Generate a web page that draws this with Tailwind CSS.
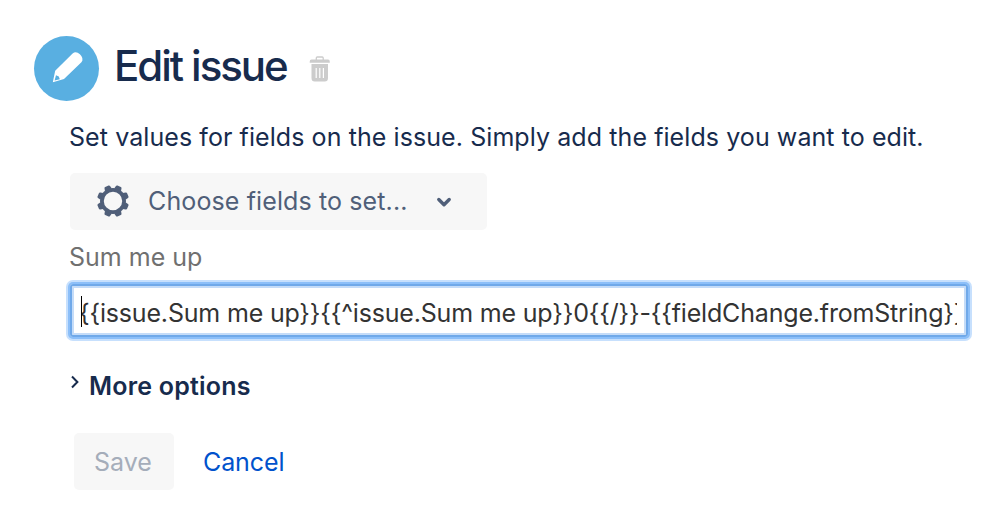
<!DOCTYPE html>
<html lang="en">
<head>
    <meta charset="UTF-8">
    <meta name="viewport" content="width=device-width, initial-scale=1.0">
    <title>Edit issue</title>
    <script src="https://cdn.jsdelivr.net/npm/@tailwindcss/browser@4"></script>
</head>
<body class="bg-white font-['Inter','Liberation_Sans',sans-serif] text-[25px] leading-[30px] text-[#172b4d] overflow-hidden">

    <div class="w-[999px] h-[521px] pt-9 pl-[34px]">

        <!-- Header -->
        <div class="flex items-center h-[65px]">
            <div class="w-[65px] h-[65px] rounded-full bg-[#59afe1]">
                <svg class="w-[65px] h-[65px]" viewBox="0 0 65 65">
                    <path fill="#fff" fill-rule="evenodd" d="M18.8 46.2 21.2 34.8 38.6 17.6Q41.8 14.6 45.9 18.2 50.4 22.6 47.4 26.2L30 43ZM20.6 44.4 25.8 43.2 24.8 40.4 22 39.2Z"/>
                </svg>
            </div>
            <h1 class="ml-[15px] w-[174px] text-[42px] leading-[50px] font-medium tracking-[-2.05px] whitespace-nowrap -mt-[5px]">Edit issue</h1>
            <svg class="ml-[21px] w-[22px] h-[26px]" viewBox="0 0 22 26">
                <path fill="none" stroke="#ccc" stroke-width="1.3" d="M7.3 4V2Q7.3 1 8.3 1H13.2Q14.2 1 14.2 2V4"/>
                <path fill="#ccc" d="M2.5 3.5H19Q20.8 3.5 20.8 5.8V6.8H.7V5.8Q.7 3.5 2.5 3.5ZM2.5 8H19V22Q19 25.5 15.8 25.5H5.7Q2.5 25.5 2.5 22Z"/>
                <path stroke="#fff" stroke-width="1.2" d="M7.2 12V22M10.8 12V22M14.4 12V22"/>
            </svg>
        </div>

        <!-- Form -->
        <div class="pl-9">
            <p class="mt-[21px] -ml-px tracking-[0.08px] whitespace-nowrap">Set values for fields on the issue. Simply add the fields you want to edit.</p>

            <button class="mt-[21px] w-[417px] h-[57px] pl-[27px] pb-0.5 rounded-[5px] bg-[#f7f7f7] text-[#505f79] flex items-center">
                <svg class="w-8 h-8" viewBox="-16 -16 32 32">
                    <circle r="11.1" fill="none" stroke="#505f79" stroke-width="3.8"/>
                    <g fill="#505f79">
                        <path id="tooth" transform="rotate(22.5)" d="M-3.7-12-3-15Q-2.8-16-1.8-16H1.8Q2.8-16 3-15L3.7-12Z"/>
                        <use href="#tooth" transform="rotate(45)"/>
                        <use href="#tooth" transform="rotate(90)"/>
                        <use href="#tooth" transform="rotate(135)"/>
                        <use href="#tooth" transform="rotate(180)"/>
                        <use href="#tooth" transform="rotate(225)"/>
                        <use href="#tooth" transform="rotate(270)"/>
                        <use href="#tooth" transform="rotate(315)"/>
                    </g>
                </svg>
                <span class="ml-[19px] w-[259px] text-left tracking-[0.12px] whitespace-nowrap">Choose fields to set...</span>
                <svg class="ml-[29px] mt-0.5 w-4 h-3" viewBox="0 0 16 12">
                    <path fill="none" stroke="#505f79" stroke-width="3.4" stroke-linecap="round" stroke-linejoin="round" d="M2.8 3.5 8 8.7 13.2 3.5"/>
                </svg>
            </button>

            <label class="block mt-3 -ml-px text-[#707070]">Sum me up</label>

            <!-- Focused input -->
            <div class="mt-3 w-[898px] h-[53px] border-2 border-[#70a9e9] shadow-[0_0_0_2px_#8cbff9,0_0_0_4px_#c7e0fd,inset_0_0_0_2px_#c5dcf8] rounded-[3px] px-[9px] flex items-center">
                <div class="flex-1 min-w-0 h-[31px] mt-0.5 border-l border-black overflow-x-clip whitespace-nowrap text-[#333]">
                    <span class="relative -left-[3px] top-0.5 tracking-[-0.18px]">{{issue.Sum me up}}{{^issue.Sum me up}}0{{/}}-{{fieldChange.fromString}}</span>
                </div>
            </div>

            <div class="mt-[34px] flex items-center font-semibold">
                <svg class="w-[10px] h-[14px] -mt-2" viewBox="0 0 10 14">
                    <path fill="none" stroke="#172b4d" stroke-width="2" d="M2 1.5 7.4 7 2 12.5"/>
                </svg>
                <span class="ml-[9px] tracking-[0.2px]">More options</span>
            </div>

            <div class="mt-8 ml-1 flex items-center">
                <button class="w-[100px] h-[57px] pr-0.5 rounded-[5px] bg-[#f7f7f7] text-[#a5adba]">Save</button>
                <a class="ml-[29px] tracking-[-0.1px] text-[#0052cc]">Cancel</a>
            </div>
        </div>
    </div>

</body>
</html>
